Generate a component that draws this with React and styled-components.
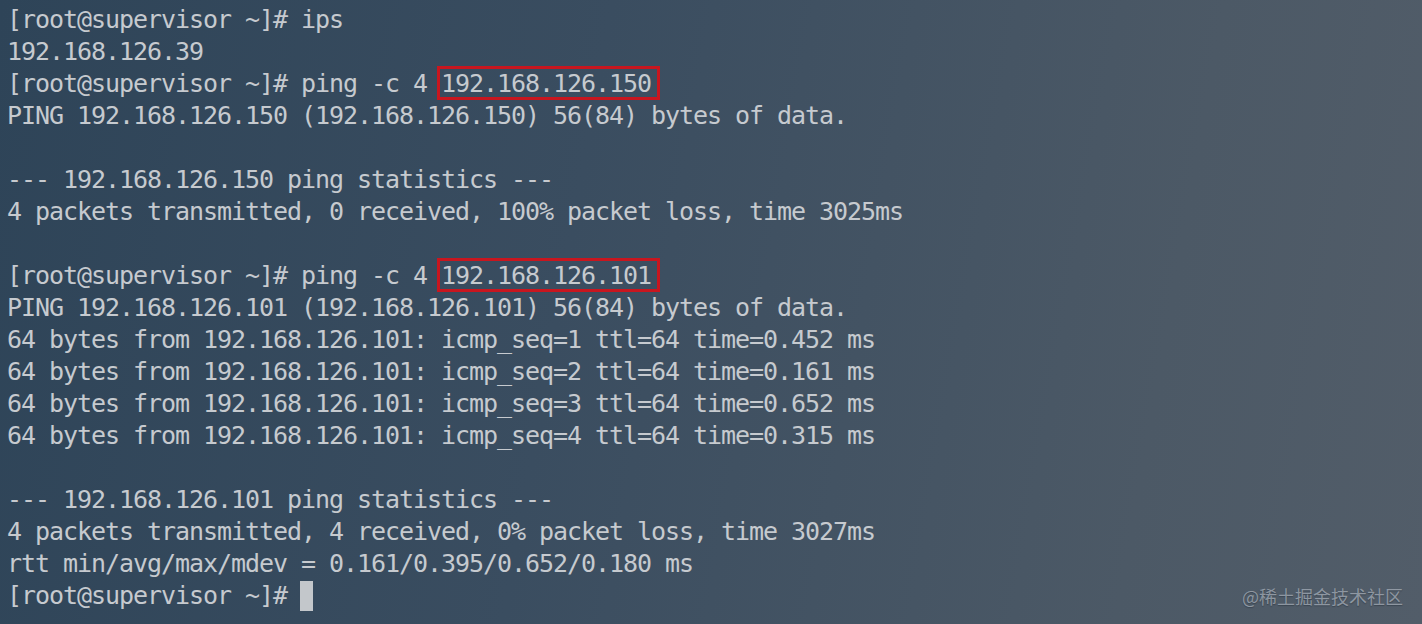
import React from "react"
import styled, { createGlobalStyle } from "styled-components"

const Global = createGlobalStyle`
  html, body {
    margin: 0;
    padding: 0;
  }
  body {
    width: 1422px;
    height: 624px;
    overflow: hidden;
  }
`

const Screen = styled.div`
  position: relative;
  width: 1422px;
  height: 624px;
  box-sizing: border-box;
  padding: 4px 0 0 7px;
  background: linear-gradient(100deg, #2e4458 0%, #3a4d60 40%, #4c5966 80%, #525d69 100%);
  font-family: "DejaVu Sans Mono", "Liberation Mono", monospace;
  font-size: 25px;
  letter-spacing: -1.05px;
  line-height: 32px;
  color: #c6cacf;
  overflow: hidden;
`

const Line = styled.div`
  height: 32px;
  white-space: pre;
`

const Marked = styled.span`
  position: relative;
  &::after {
    content: "";
    position: absolute;
    left: -4px;
    right: -9px;
    top: -3px;
    bottom: -2px;
    border: 3px solid #c8161f;
  }
`

const Cursor = styled.span`
  display: inline-block;
  width: 13px;
  height: 30px;
  margin-left: 13px;
  vertical-align: -7px;
  background: #c3c7cb;
`

const Watermark = styled.div`
  position: absolute;
  right: 19px;
  bottom: 17px;
  font-family: "Noto Sans CJK SC", "Noto Sans", sans-serif;
  font-size: 18px;
  line-height: 22px;
  letter-spacing: 0;
  color: rgba(170, 178, 188, 0.72);
  text-shadow: 0 1px 1px rgba(20, 30, 40, 0.35);
`

const lines = [
  "[root@supervisor ~]# ips",
  "192.168.126.39",
  ["[root@supervisor ~]# ping -c 4 ", "192.168.126.150"],
  "PING 192.168.126.150 (192.168.126.150) 56(84) bytes of data.",
  "",
  "--- 192.168.126.150 ping statistics ---",
  "4 packets transmitted, 0 received, 100% packet loss, time 3025ms",
  "",
  ["[root@supervisor ~]# ping -c 4 ", "192.168.126.101"],
  "PING 192.168.126.101 (192.168.126.101) 56(84) bytes of data.",
  "64 bytes from 192.168.126.101: icmp_seq=1 ttl=64 time=0.452 ms",
  "64 bytes from 192.168.126.101: icmp_seq=2 ttl=64 time=0.161 ms",
  "64 bytes from 192.168.126.101: icmp_seq=3 ttl=64 time=0.652 ms",
  "64 bytes from 192.168.126.101: icmp_seq=4 ttl=64 time=0.315 ms",
  "",
  "--- 192.168.126.101 ping statistics ---",
  "4 packets transmitted, 4 received, 0% packet loss, time 3027ms",
  "rtt min/avg/max/mdev = 0.161/0.395/0.652/0.180 ms",
]

export default function App() {
  return (
    <>
      <Global />
      <Screen>
        {lines.map((l, i) =>
          Array.isArray(l) ? (
            <Line key={i}>
              {l[0]}
              <Marked>{l[1]}</Marked>
            </Line>
          ) : (
            <Line key={i}>{l}</Line>
          )
        )}
        <Line>
          [root@supervisor ~]#<Cursor />
        </Line>
        <Watermark>@稀土掘金技术社区</Watermark>
      </Screen>
    </>
  )
}
